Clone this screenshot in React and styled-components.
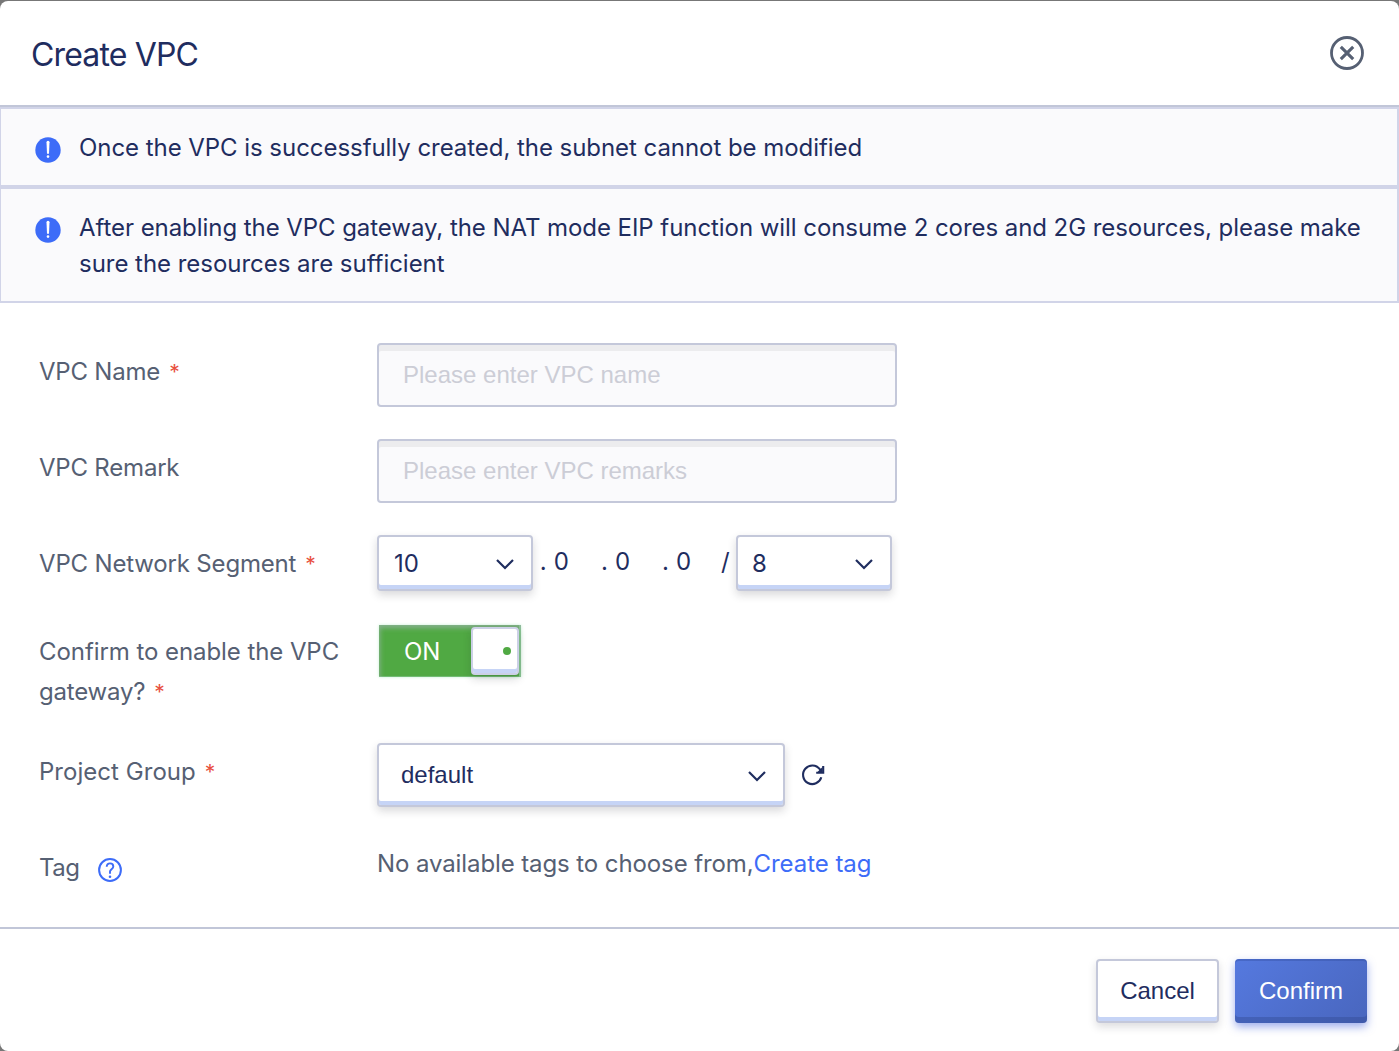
import React from 'react';
import styled, { createGlobalStyle } from 'styled-components';

const navy = '#1f2d5f';
const slate = '#566073';
const line = '#c4c8da';
const blue = '#3d6cf8';

const GlobalStyle = createGlobalStyle`
  * { box-sizing: border-box; }
  body { margin: 0; background: #777; overflow: hidden; }
`;

const Page = styled.div`
  height: 1051px;
  padding-top: 1px;
  background: #777;
  font-family: Inter, "Liberation Sans", sans-serif;
  font-size: 24px;
  font-weight: 370;
  color: ${navy};
`;

const Modal = styled.section`
  height: 1050px;
  background: #fff;
  border-radius: 8px;
  overflow: hidden;
  display: flex;
  flex-direction: column;
`;

const Header = styled.header`
  height: 106px;
  flex: none;
  display: flex;
  align-items: center;
  justify-content: space-between;
  padding: 0 35px 0 31px;
  border-bottom: 2px solid #c1c6d8;
`;

const Title = styled.h1`
  margin: 3px 0 0;
  font-size: 32px;
  font-weight: 370;
  line-height: 40px;
  letter-spacing: ${(p) => p.$spacing}px;
`;

const IconButton = styled.button`
  display: flex;
  padding: 0;
  border: 0;
  background: none;
  cursor: pointer;
  color: ${(p) => p.$color || navy};
`;

const Notice = styled.div`
  flex: none;
  display: flex;
  height: ${(p) => p.$height}px;
  padding: 21px 0 0 34px;
  background: #fafafc;
  border: 2px solid #d1d4e8;
  border-left-width: 1px;
  svg { flex: none; margin-top: 7px; }
`;

const NoticeText = styled.p`
  margin: 0 0 0 18px;
  line-height: 36px;
  white-space: nowrap;
`;

const Spaced = styled.span`
  letter-spacing: ${(p) => p.$spacing}px;
`;

const Form = styled.form`
  flex: none;
  height: 624px;
  padding: 40px 39px 0;
`;

const Row = styled.div`
  display: grid;
  grid-template-columns: 338px 1fr;
  align-items: start;
  height: ${(p) => p.$height || 96}px;
`;

const Label = styled.label`
  padding-top: 9px;
  line-height: 40px;
  color: ${slate};
  white-space: nowrap;
  svg { margin-left: 19px; vertical-align: -6px; }
`;

const Required = styled.span`
  margin-left: ${(p) => p.$gap || 9}px;
  font-size: 21px;
  line-height: 1;
  color: #e8503f;
`;

const Controls = styled.div`
  display: flex;
  align-items: center;
  padding-top: ${(p) => p.$offset || 0}px;
`;

const TextInput = styled.input`
  width: 520px;
  height: 64px;
  padding: 0 24px;
  border: 2px solid ${line};
  border-radius: 4px;
  background: #fafafc;
  box-shadow: inset 0 6px 0 #ececee;
  font: 24px "Liberation Sans", Arial, sans-serif;
  color: ${navy};
  outline: none;
  &::placeholder { color: #cccdd6; opacity: 1; }
`;

const Select = styled.div`
  display: flex;
  align-items: center;
  justify-content: space-between;
  width: ${(p) => p.$width}px;
  height: ${(p) => p.$height}px;
  padding: 0 16px 0 ${(p) => p.$indent}px;
  border: 2px solid ${line};
  border-radius: 4px;
  background: #fff;
  box-shadow: inset 0 -4px 0 #c6d4f6, 0 4px 8px rgba(30, 30, 40, 0.17);
  font-family: ${(p) => (p.$plain ? '"Liberation Sans", Arial, sans-serif' : 'inherit')};
  svg { position: relative; top: ${(p) => (p.$plain ? 1 : 0.5)}px; }
`;

const Octet = styled.span`
  width: ${(p) => p.$width}px;
  line-height: 40px;
  margin-top: -2px;
  white-space: pre;
  i { font-style: normal; display: inline-block; width: 14px; }
`;

const Slash = styled.span`
  width: 15px;
  line-height: 40px;
  margin-top: -2px;
`;

const Switch = styled.div`
  display: flex;
  align-items: flex-start;
  justify-content: space-between;
  width: 142px;
  height: 52px;
  margin: 2px 0 0 2px;
  padding: 2px 2px 0 25px;
  background: #50a943;
  box-shadow: inset 1px 3px 5px rgba(155, 180, 170, 0.75), inset -2px 0 0 #84c98c, inset 0 -1px 0 #70bd72, 0 0 3px #c9f0d4;
  color: #fff;
`;

const SwitchText = styled.span`
  line-height: 49px;
`;

const Knob = styled.span`
  display: flex;
  align-items: center;
  justify-content: flex-end;
  width: 48px;
  height: 48px;
  padding: 0 6px 0 0;
  border: 2px solid #ccd0e6;
  border-radius: 4px;
  background: #fff;
  box-shadow: inset 0 -4px 0 #c6d4f6, 0 4px 8px rgba(30, 30, 40, 0.17);
`;

const Dot = styled.span`
  width: 8px;
  height: 8px;
  border-radius: 50%;
  background: #50a943;
`;

const Link = styled.a`
  color: ${blue};
  cursor: pointer;
`;

const TagText = styled.p`
  margin: 0;
  line-height: 40px;
  color: ${slate};
`;

const Footer = styled.footer`
  flex: 1;
  display: flex;
  justify-content: flex-end;
  gap: 16px;
  padding: 30px 32px 0;
  border-top: 2px solid #c1c6d8;
`;

const Button = styled.button`
  width: ${(p) => (p.$primary ? 132 : 123)}px;
  height: 64px;
  padding: 0;
  border: ${(p) => (p.$primary ? '0' : `2px solid ${line}`)};
  border-radius: 4px;
  background: ${(p) => (p.$primary ? 'linear-gradient(135deg, #5579df, #4966be)' : '#fff')};
  box-shadow: ${(p) =>
    p.$primary
      ? 'inset 0 -6px 0 rgba(50, 75, 145, 0.42), inset 0 2px 0 rgba(50, 75, 155, 0.35), 0 4px 8px rgba(65, 95, 220, 0.5)'
      : 'inset 0 -4px 0 #c6d4f6, 0 4px 8px rgba(30, 30, 40, 0.15)'};
  font: 24px "Liberation Sans", Arial, sans-serif;
  color: ${(p) => (p.$primary ? '#fff' : navy)};
`;

const CloseIcon = () => (
  <svg width="34" height="34" viewBox="0 0 34 34" fill="none" stroke="currentColor">
    <circle cx="17" cy="17" r="15.5" strokeWidth="2.8" />
    <path d="M10.8 10.8 23.2 23.2M23.2 10.8 10.8 23.2" strokeWidth="3.1" />
  </svg>
);

const NoticeIcon = () => (
  <svg width="26" height="26" viewBox="0 0 26 26">
    <circle cx="13" cy="13" r="12.7" fill={blue} />
    <path d="M11.5 5.2a1.5 1.5 0 0 1 3 0L14 16.8h-2z" fill="#fff" />
    <circle cx="13" cy="19.6" r="1.3" fill="#fff" />
  </svg>
);

const Chevron = () => (
  <svg width="20" height="12" viewBox="0 0 20 12" fill="none" stroke={navy} strokeWidth="2.2">
    <path d="M2 2 10 10 18 2" />
  </svg>
);

const RefreshIcon = () => (
  <svg width="24" height="24" viewBox="0 0 24 24" fill="none" stroke="currentColor" strokeWidth="2.1">
    <path d="M20.3 14.3A9.3 9.3 0 1 1 18.8 6.2L20.8 8.6" />
    <path d="M22.2 3v6.7h-7" />
    <path d="M21.5 4v5h-5z" fill="currentColor" stroke="none" />
  </svg>
);

const HelpIcon = () => (
  <svg width="24" height="24" viewBox="0 0 24 24" fill="none" stroke={blue}>
    <circle cx="12" cy="12" r="10.9" strokeWidth="2" />
    <path d="M8.7 8.8C8.7 6.6 10.1 5.4 12 5.4s3.3 1.2 3.3 3c0 2.6-3.3 3-3.3 5.2v2.2" strokeWidth="1.9" />
    <circle cx="12" cy="18.7" r="1.3" fill={blue} stroke="none" />
  </svg>
);

export default function App() {
  return (
    <Page>
      <GlobalStyle />
      <Modal>
        <Header>
          <Title $spacing={-0.85}>Create VPC</Title>
          <IconButton $color={slate} aria-label="Close"><CloseIcon /></IconButton>
        </Header>
        <Notice $height={80}>
          <NoticeIcon />
          <NoticeText><Spaced $spacing={-0.05}>Once the VPC is successfully created, the subnet cannot be modified</Spaced></NoticeText>
        </Notice>
        <Notice $height={116}>
          <NoticeIcon />
          <NoticeText>
            <Spaced $spacing={-0.06}>After enabling the VPC gateway, the NAT mode EIP function will consume 2 cores and 2G resources, please make</Spaced>
            <br />
            <Spaced $spacing={-0.03}>sure the resources are sufficient</Spaced>
          </NoticeText>
        </Notice>
        <Form>
          <Row>
            <Label><Spaced $spacing={-0.2}>VPC Name</Spaced><Required>*</Required></Label>
            <Controls><TextInput placeholder="Please enter VPC name" /></Controls>
          </Row>
          <Row>
            <Label><Spaced $spacing={-0.2}>VPC Remark</Spaced></Label>
            <Controls><TextInput placeholder="Please enter VPC remarks" /></Controls>
          </Row>
          <Row $height={88}>
            <Label><Spaced $spacing={-0.17}>VPC Network Segment</Spaced><Required>*</Required></Label>
            <Controls>
              <Select $width={156} $height={56} $indent={15}>10<Chevron /></Select>
              <Octet $width={68}>&nbsp;<i>.</i>0</Octet>
              <Octet $width={61}><i>.</i>0</Octet>
              <Octet $width={59}><i>.</i>0</Octet>
              <Slash>/</Slash>
              <Select $width={156} $height={56} $indent={14}>8<Chevron /></Select>
            </Controls>
          </Row>
          <Row $height={120}>
            <Label>
              <Spaced $spacing={-0.07}>Confirm to enable the VPC</Spaced>
              <br />
              <Spaced $spacing={-0.2}>gateway?</Spaced><Required>*</Required>
            </Label>
            <Controls>
              <Switch><SwitchText>ON</SwitchText><Knob><Dot /></Knob></Switch>
            </Controls>
          </Row>
          <Row>
            <Label><Spaced $spacing={0.04}>Project Group</Spaced><Required>*</Required></Label>
            <Controls>
              <Select $width={408} $height={64} $indent={22} $plain>default<Chevron /></Select>
              <IconButton style={{ marginLeft: 16 }} aria-label="Refresh"><RefreshIcon /></IconButton>
            </Controls>
          </Row>
          <Row $height={88}>
            <Label><Spaced $spacing={-0.5}>Tag</Spaced><HelpIcon /></Label>
            <Controls $offset={5}>
              <TagText>
                <Spaced $spacing={-0.1}>No available tags to choose from,</Spaced>
                <Link><Spaced $spacing={-0.05}>Create tag</Spaced></Link>
              </TagText>
            </Controls>
          </Row>
        </Form>
        <Footer>
          <Button>Cancel</Button>
          <Button $primary>Confirm</Button>
        </Footer>
      </Modal>
    </Page>
  );
}
